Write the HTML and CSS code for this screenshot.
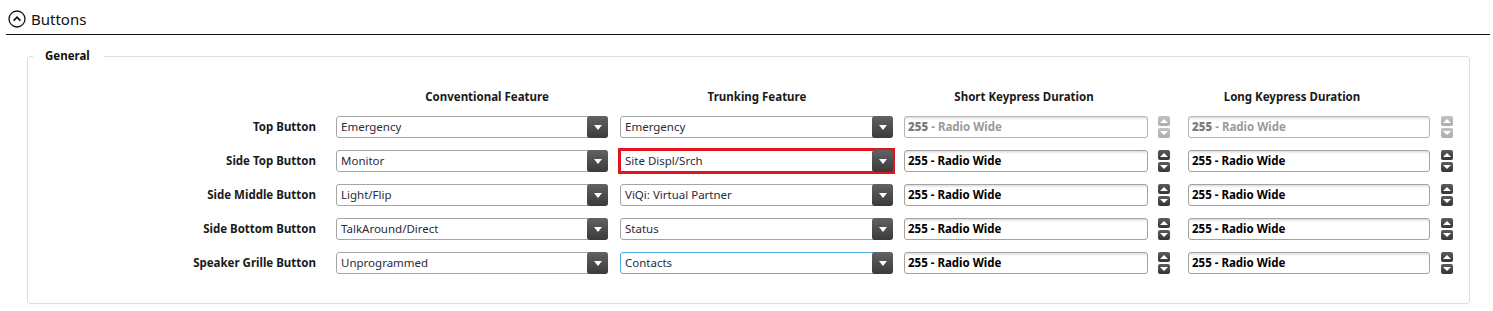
FILE: index.html
```html
<!DOCTYPE html>
<html lang="en">
<head>
    <meta charset="UTF-8">
    <title>Buttons</title>
    <link rel="stylesheet" href="styles.css">
</head>
<body>
    <div class="page">
        <div class="section-head">
            <svg class="toggle" width="18" height="18" viewBox="0 0 18 18">
                <circle cx="9" cy="9" r="8" fill="none" stroke="#111" stroke-width="1.3"/>
                <path d="M5.6 10.6 L9 7.2 L12.4 10.6" fill="none" stroke="#111" stroke-width="1.8"/>
            </svg>
            <span class="section-title">Buttons</span>
        </div>

        <fieldset class="group">
            <legend>General</legend>
            <div class="grid">
                <div></div>
                <div class="col-head head-conv">Conventional Feature</div>
                <div class="col-head head-trunk">Trunking Feature</div>
                <div class="col-head head-short">Short Keypress Duration</div>
                <div></div>
                <div class="col-head head-long">Long Keypress Duration</div>
                <div></div>

                <div class="label">Top Button</div>
                <div class="combo c1"><span>Emergency</span><i class="drop"></i></div>
                <div class="combo c2"><span>Emergency</span><i class="drop"></i></div>
                <div class="field disabled"><b>255</b>&nbsp;- Radio Wide</div>
                <div class="spin disabled"><i class="up"></i><i class="down"></i></div>
                <div class="field disabled long"><b>255</b>&nbsp;- Radio Wide</div>
                <div class="spin disabled"><i class="up"></i><i class="down"></i></div>

                <div class="label">Side Top Button</div>
                <div class="combo c1"><span>Monitor</span><i class="drop"></i></div>
                <div class="combo c2 marked"><span>Site Displ/Srch</span><i class="drop"></i></div>
                <div class="field">255 - Radio Wide</div>
                <div class="spin"><i class="up"></i><i class="down"></i></div>
                <div class="field long">255 - Radio Wide</div>
                <div class="spin"><i class="up"></i><i class="down"></i></div>

                <div class="label">Side Middle Button</div>
                <div class="combo c1"><span>Light/Flip</span><i class="drop"></i></div>
                <div class="combo c2"><span>ViQi: Virtual Partner</span><i class="drop"></i></div>
                <div class="field">255 - Radio Wide</div>
                <div class="spin"><i class="up"></i><i class="down"></i></div>
                <div class="field long">255 - Radio Wide</div>
                <div class="spin"><i class="up"></i><i class="down"></i></div>

                <div class="label">Side Bottom Button</div>
                <div class="combo c1"><span>TalkAround/Direct</span><i class="drop"></i></div>
                <div class="combo c2"><span>Status</span><i class="drop"></i></div>
                <div class="field">255 - Radio Wide</div>
                <div class="spin"><i class="up"></i><i class="down"></i></div>
                <div class="field long">255 - Radio Wide</div>
                <div class="spin"><i class="up"></i><i class="down"></i></div>

                <div class="label">Speaker Grille Button</div>
                <div class="combo c1"><span>Unprogrammed</span><i class="drop"></i></div>
                <div class="combo c2 focused"><span>Contacts</span><i class="drop"></i></div>
                <div class="field">255 - Radio Wide</div>
                <div class="spin"><i class="up"></i><i class="down"></i></div>
                <div class="field long">255 - Radio Wide</div>
                <div class="spin"><i class="up"></i><i class="down"></i></div>
            </div>
        </fieldset>
    </div>
</body>
</html>
```

FILE: styles.css
```css
body {
    margin: 0;
    background: #fff;
    font-family: 'Noto Sans', 'Open Sans', sans-serif;
    font-size: 11.5px;
    color: #1a1a1a;
}
.page {
    padding: 0 3px 0 6px;
}
.section-head {
    display: flex;
    align-items: center;
    padding: 8px 0 4px 2px;
    height: 22px;
    border-bottom: 1px solid #111;
}
.toggle {
    display: block;
    margin-right: 5px;
}
.section-title {
    font-size: 15px;
    color: #111;
}
.group {
    margin: 13px 20px 0 21px;
    padding: 0 0 29px 0;
    border: 1px solid #d6dfe6;
    border-radius: 3px;
}
.group legend {
    margin-left: 5px;
    padding: 0 14px 0 12px;
    font-weight: bold;
    line-height: 16px;
    color: #111;
}
.grid {
    display: grid;
    grid-template-columns: 308px 284px 284px 254px 30px 253px 12px;
    grid-template-rows: 15px;
    grid-auto-rows: 22px;
    row-gap: 12px;
    padding-top: 25px;
}
.grid > .col-head {
    font-weight: bold;
    text-align: center;
    line-height: 16px;
}
.head-conv { padding-left: 18px; }
.head-trunk { padding-right: 10px; }
.head-short { padding-right: 14px; }
.head-long { padding-right: 45px; }
.label {
    font-weight: bold;
    text-align: right;
    padding-right: 20px;
    line-height: 22px;
}
.combo {
    display: flex;
    align-items: stretch;
    box-sizing: border-box;
    height: 22px;
    border: 1px solid #a5a5a5;
    border-radius: 3px;
    background: #fff;
    color: #2b2b3a;
}
.combo.c1 { width: 272px; }
.combo.c2 { width: 273px; }
.combo span {
    flex: 1;
    padding-left: 4px;
    line-height: 20px;
}
.combo.focused { border-color: #49ade3; }
.combo.marked {
    border-color: #e3141d;
    border-radius: 0;
    box-shadow: 0 0 0 2px #e3141d;
}
.drop {
    width: 21px;
    margin: -1px -1px -1px 0;
    border-radius: 3px;
    background: linear-gradient(#626262, #3a3a3a);
    display: flex;
    align-items: center;
    justify-content: center;
}
.drop::after {
    content: '';
    border-left: 4px solid transparent;
    border-right: 4px solid transparent;
    border-top: 5px solid #fff;
}
.field {
    box-sizing: border-box;
    width: 244px;
    height: 22px;
    border: 1px solid #a3a3a3;
    border-radius: 3px;
    padding-left: 3px;
    line-height: 20px;
    font-weight: bold;
    color: #000;
    background: #fff;
    box-shadow: inset 0 3px 3px -2px rgba(0, 0, 0, 0.18);
}
.field.long { width: 242px; }
.field.disabled {
    color: #9a9a9a;
    border-color: #b4b4b4;
}
.field.disabled b { color: #7c7c7c; }
.spin {
    display: flex;
    flex-direction: column;
    justify-content: space-between;
    height: 22px;
}
.spin i {
    height: 10px;
    width: 12px;
    border-radius: 2px;
    background: linear-gradient(#5c5c5c, #353535);
    display: flex;
    align-items: center;
    justify-content: center;
}
.spin.disabled i { background: linear-gradient(#c2c2c2, #acacac); }
.spin .up::after {
    content: '';
    border-left: 4px solid transparent;
    border-right: 4px solid transparent;
    border-bottom: 4px solid #fff;
}
.spin .down::after {
    content: '';
    border-left: 4px solid transparent;
    border-right: 4px solid transparent;
    border-top: 4px solid #fff;
}
```
